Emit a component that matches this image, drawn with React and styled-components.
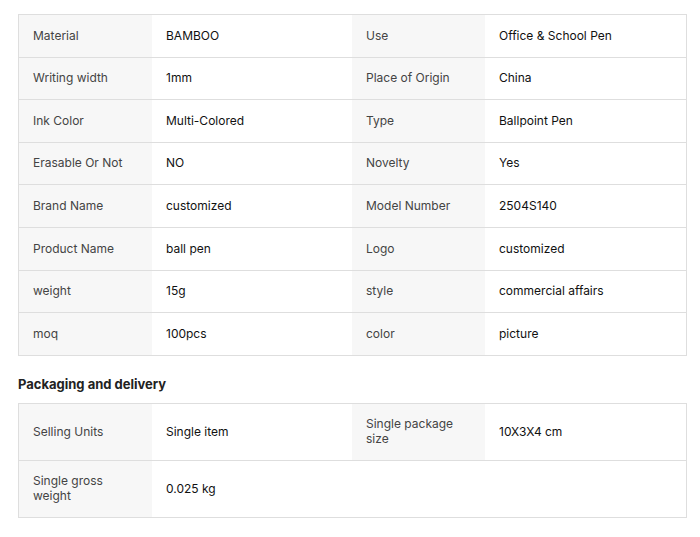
import React from "react";
import styled, { createGlobalStyle } from "styled-components";

const GlobalStyle = createGlobalStyle`
  body {
    margin: 0;
    background: #fff;
    font-family: Inter, "Noto Sans", "Liberation Sans", sans-serif;
  }
`;

const Page = styled.div`
  padding: 14px 13px 0 18px;
`;

const Table = styled.div`
  border: 1px solid #dedede;
  display: flex;
  flex-direction: column;
`;

const Row = styled.div`
  display: grid;
  grid-template-columns: 133px 200px 133px 1fr;
  & + & {
    border-top: 1px solid #dedede;
  }
`;

const Cell = styled.div`
  padding: 13.6px 14px;
  font-size: 12px;
  line-height: 14.4px;
  display: flex;
  align-items: center;
  background: ${(p) => (p.$label ? "#f7f7f7" : "#fff")};
  color: ${(p) => (p.$label ? "#444" : "#111")};
`;

const Heading = styled.h3`
  margin: 20px 0 11px;
  font-size: 13px;
  line-height: 16px;
  font-weight: 700;
  color: #222;
`;

const attributes = [
  ["Material", "BAMBOO", "Use", "Office & School Pen"],
  ["Writing width", "1mm", "Place of Origin", "China"],
  ["Ink Color", "Multi-Colored", "Type", "Ballpoint Pen"],
  ["Erasable Or Not", "NO", "Novelty", "Yes"],
  ["Brand Name", "customized", "Model Number", "2504S140"],
  ["Product Name", "ball pen", "Logo", "customized"],
  ["weight", "15g", "style", "commercial affairs"],
  ["moq", "100pcs", "color", "picture"],
];

const packaging = [
  ["Selling Units", "Single item", "Single package size", "10X3X4 cm"],
  ["Single gross weight", "0.025 kg"],
];

function SpecTable({ rows }) {
  return (
    <Table>
      {rows.map((r, i) => (
        <Row key={i}>
          {r.map((text, j) => (
            <Cell key={j} $label={j % 2 === 0}>
              {text}
            </Cell>
          ))}
        </Row>
      ))}
    </Table>
  );
}

export default function App() {
  return (
    <Page>
      <GlobalStyle />
      <SpecTable rows={attributes} />
      <Heading>Packaging and delivery</Heading>
      <SpecTable rows={packaging} />
    </Page>
  );
}
